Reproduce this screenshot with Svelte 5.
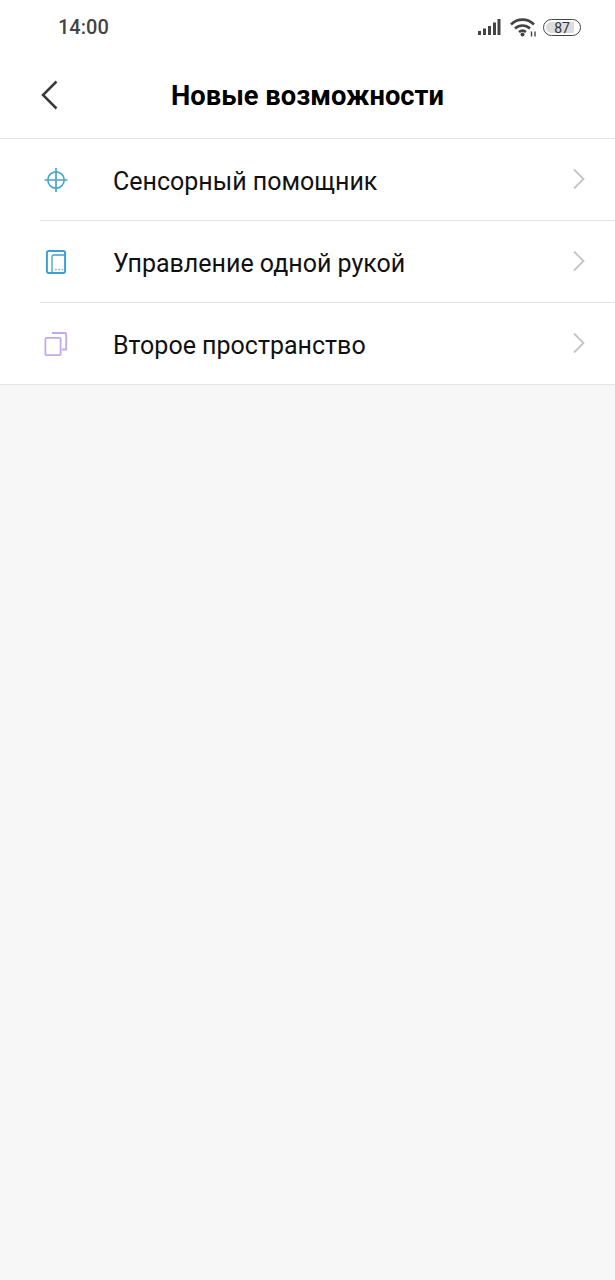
<script lang="ts">
	const items = [
		{ label: 'Сенсорный помощник', icon: 'touch' },
		{ label: 'Управление одной рукой', icon: 'hand' },
		{ label: 'Второе пространство', icon: 'space' }
	];
</script>

<div class="page">
	<div class="status">
		<span class="time">14:00</span>
		<div class="status-icons">
			<svg width="24" height="18" viewBox="0 0 24 18">
				<g fill="#444">
					<rect x="0" y="13" width="3" height="4" />
					<rect x="5" y="10.5" width="3" height="6.5" />
					<rect x="10" y="8" width="3" height="9" />
					<rect x="15" y="4.5" width="3" height="12.5" />
					<rect x="19.5" y="1" width="3" height="16" />
				</g>
			</svg>
			<svg class="wifi" width="28" height="20" viewBox="0 0 28 20">
				<g fill="none" stroke="#444" stroke-width="2.6">
					<path d="M1 7.5 C7.5 1, 17.5 1, 24 7.5" />
					<path d="M5 11.5 C9.5 7.5, 15.5 7.5, 20 11.5" />
					<path d="M9 15 C11.5 13, 13.5 13, 16 15" />
				</g>
				<circle cx="12.5" cy="17.5" r="2" fill="#444" />
				<path d="M21.5 19.5 V14.5 M25 19.5 V14.5" stroke="#444" stroke-width="1.4" />
			</svg>
			<div class="battery">
				<div class="battery-fill"></div>
				<span>87</span>
			</div>
		</div>
	</div>

	<header class="title-bar">
		<button class="back" aria-label="Назад">
			<svg width="18" height="30" viewBox="0 0 18 30">
				<path d="M15.5 1.5 L2 15 L15.5 28.5" fill="none" stroke="#3a3a3a" stroke-width="2.5" />
			</svg>
		</button>
		<h1>Новые возможности</h1>
	</header>

	<ul class="list">
		{#each items as item}
			<li class="row">
				<div class="icon">
					{#if item.icon === 'touch'}
						<svg width="24" height="26" viewBox="0 0 24 26">
							<g fill="none" stroke="#4aa5cf" stroke-width="1.7">
								<circle cx="12" cy="13" r="8.2" />
								<path d="M12 1 V25 M0.5 13 H23.5" />
							</g>
						</svg>
					{:else if item.icon === 'hand'}
						<svg width="24" height="26" viewBox="0 0 24 26">
							<g fill="none" stroke="#3f9ed2">
								<rect x="2.9" y="1.9" width="18.2" height="22.2" rx="2" stroke-width="2" />
								<path d="M8 24 V7.5 a1.5 1.5 0 0 1 1.5 -1.5 H21" stroke-width="1.3" />
							</g>
							<path d="M11 20.5 h1.8 M14.2 20.5 h1.8 M17.4 20.5 h1.8" stroke="#7dbcdd" stroke-width="1.6" />
						</svg>
					{:else}
						<svg width="24" height="26" viewBox="0 0 24 26">
							<g fill="none" stroke="#c3a8ea" stroke-width="1.8">
								<rect x="1.4" y="6.9" width="15.2" height="17.2" rx="1.2" />
								<path d="M8 2 H21 a1.2 1.2 0 0 1 1.2 1.2 V18.5 H18" />
							</g>
						</svg>
					{/if}
				</div>
				<div class="row-body">
					<span class="label">{item.label}</span>
					<svg class="chevron" width="14" height="22" viewBox="0 0 14 22">
						<path d="M2 1.5 L11.5 11 L2 20.5" fill="none" stroke="#c4c4c4" stroke-width="1.8" />
					</svg>
				</div>
			</li>
		{/each}
	</ul>
</div>

<style>
	:global(body) {
		margin: 0;
		background: #f7f7f7;
	}

	.page {
		width: 615px;
		min-height: 1280px;
		background: #f7f7f7;
		font-family: Roboto, 'Noto Sans', sans-serif;
		color: #000;
	}

	.status {
		height: 55px;
		box-sizing: border-box;
		background: #fff;
		display: flex;
		align-items: center;
		justify-content: space-between;
		padding: 0 34px 1px 58px;
	}

	.time {
		font-size: 20px;
		font-weight: 500;
		color: #444;
	}

	.status-icons {
		display: flex;
		align-items: center;
		gap: 8px;
	}

	.battery {
		position: relative;
		width: 38px;
		height: 17px;
		box-sizing: border-box;
		border: 1.5px solid #444;
		border-radius: 9px;
		margin-left: -3px;
		display: flex;
		align-items: center;
		justify-content: center;
		overflow: hidden;
	}

	.battery-fill {
		position: absolute;
		left: 2px;
		top: 2px;
		bottom: 2px;
		width: 78%;
		background: #dcdcdc;
		border-radius: 5px 0 0 5px;
	}

	.battery span {
		position: relative;
		font-size: 14px;
		color: #333;
		line-height: 12px;
		padding-top: 1px;
	}

	.title-bar {
		height: 84px;
		box-sizing: border-box;
		background: #fff;
		border-bottom: 1px solid #e4e4e4;
		display: flex;
		align-items: center;
		justify-content: center;
		position: relative;
		padding-bottom: 2px;
	}

	.back {
		position: absolute;
		left: 41px;
		top: 25px;
		padding: 0;
		border: 0;
		background: none;
		line-height: 0;
	}

	h1 {
		margin: 0;
		font-size: 27.3px;
		font-weight: 700;
		color: #000;
	}

	.list {
		margin: 0;
		padding: 0;
		list-style: none;
		background: #fff;
	}

	.row {
		position: relative;
		display: flex;
		align-items: center;
		height: 82px;
		padding-left: 40px;
	}

	.row::after {
		content: '';
		position: absolute;
		left: 40px;
		right: 0;
		bottom: 0;
		height: 1px;
		background: #e4e4e4;
	}

	.row:last-child::after {
		left: 0;
	}

	.icon {
		width: 32px;
		display: flex;
		justify-content: center;
		line-height: 0;
	}

	.row-body {
		flex: 1;
		display: flex;
		align-items: center;
		justify-content: space-between;
		height: 100%;
		margin-left: 41px;
		padding-right: 29px;
	}

	.chevron {
		margin-top: -2px;
	}

	.label {
		font-size: 25px;
		color: #111;
		margin-top: 2px;
	}
</style>
